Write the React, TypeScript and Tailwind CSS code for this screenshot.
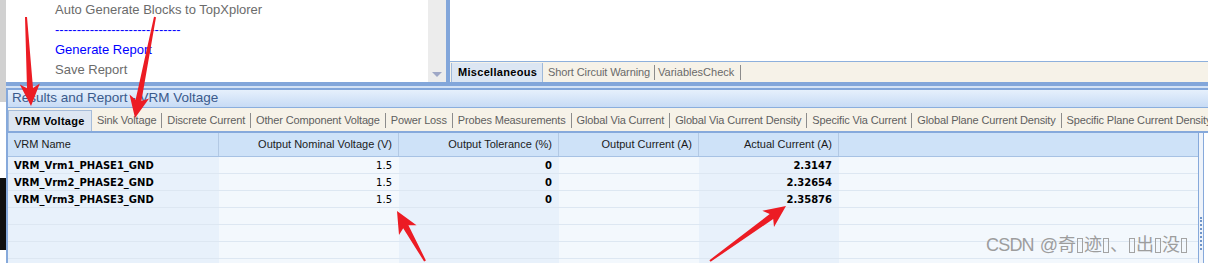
import React from "react";

type Pt = [number, number];

function arrowPoints(tail: Pt, tip: Pt, w0: number, w1: number, hw: number, hl: number): string {
  const [x1, y1] = tail;
  const [x2, y2] = tip;
  const dx = x2 - x1;
  const dy = y2 - y1;
  const L = Math.hypot(dx, dy);
  const ux = dx / L;
  const uy = dy / L;
  const px = -uy;
  const py = ux;
  const bx = x2 - ux * hl;
  const by = y2 - uy * hl;
  const nx = bx + ux * 4;
  const ny = by + uy * 4;
  const pts: Pt[] = [
    [x1 + (px * w0) / 2, y1 + (py * w0) / 2],
    [nx + (px * w1) / 2, ny + (py * w1) / 2],
    [bx + (px * hw) / 2, by + (py * hw) / 2],
    [x2, y2],
    [bx - (px * hw) / 2, by - (py * hw) / 2],
    [nx - (px * w1) / 2, ny - (py * w1) / 2],
    [x1 - (px * w0) / 2, y1 - (py * w0) / 2],
  ];
  return pts.map((p) => `${p[0].toFixed(1)},${p[1].toFixed(1)}`).join(" ");
}

const arrows: { tail: Pt; tip: Pt }[] = [
  { tail: [26, 17], tip: [31, 106] },
  { tail: [155, 17], tip: [135, 118] },
  { tail: [425, 261], tip: [397, 211] },
  { tail: [710, 261], tip: [786, 206] },
];

const bottomTabs = [
  "Sink Voltage",
  "Discrete Current",
  "Other Component Voltage",
  "Power Loss",
  "Probes Measurements",
  "Global Via Current",
  "Global Via Current Density",
  "Specific Via Current",
  "Global Plane Current Density",
  "Specific Plane Current Density",
];

const colW = ["w-[211px]", "w-[180px]", "w-[160px]", "w-[140px]", "w-[140px]", "w-[359px]"];
const colBg = ["bg-[#e8f1fb]", "bg-[#f3f8fd]", "bg-[#e8f1fb]", "bg-[#f3f8fd]", "bg-[#e8f1fb]", "bg-[#f3f8fd]"];

const headers = [
  "VRM Name",
  "Output Nominal Voltage (V)",
  "Output Tolerance (%)",
  "Output Current (A)",
  "Actual Current (A)",
  "",
];

const rows: string[][] = [
  ["VRM_Vrm1_PHASE1_GND", "1.5", "0", "", "2.3147", ""],
  ["VRM_Vrm2_PHASE2_GND", "1.5", "0", "", "2.32654", ""],
  ["VRM_Vrm3_PHASE3_GND", "1.5", "0", "", "2.35876", ""],
  ["", "", "", "", "", ""],
  ["", "", "", "", "", ""],
  ["", "", "", "", "", ""],
  ["", "", "", "", "", ""],
];

function Tofu() {
  return <span className="mx-[1px] inline-block h-[15px] w-[6px] border border-[#a3a3a3]" />;
}

export default function App() {
  return (
    <div className="relative flex h-[263px] w-[1208px] overflow-hidden bg-white font-['Liberation_Sans',Arial,sans-serif]">
      {/* left screen strip */}
      <div className="flex w-[6px] shrink-0 flex-col">
        <div className="h-[102px] shrink-0 bg-[#d1d1d1]" />
        <div className="h-[76px] shrink-0 bg-white" />
        <div className="h-[72px] shrink-0 bg-[#101010]" />
        <div className="flex-1 bg-white" />
      </div>

      <div className="flex h-[263px] w-[1202px] shrink-0 flex-col overflow-hidden">
        {/* top area */}
        <div className="flex h-[82px] shrink-0">
          <div className="flex w-[422px] shrink-0 flex-col bg-white pl-[49px] text-[13px] leading-[20px] whitespace-nowrap">
            <div className="text-[#6b6b6b]">Auto Generate Blocks to TopXplorer</div>
            <div className="text-[#0000ff]">-----------------------------</div>
            <div className="text-[#0000ff]">Generate Report</div>
            <div className="text-[#6b6b6b]">Save Report</div>
          </div>
          <div className="flex w-[18px] shrink-0 flex-col items-center justify-end bg-[#ececec] pb-[5px]">
            <svg width="10" height="5" viewBox="0 0 10 5">
              <path d="M0 0H10L5 5Z" fill="#9ea7c6" />
            </svg>
          </div>
          <div className="w-[4px] shrink-0 bg-[#82a6da]" />
          <div className="flex flex-1 flex-col">
            <div className="h-[61px] shrink-0 bg-white" />
            <div className="flex h-[21px] shrink-0 items-center border-t border-[#8eb0dc] bg-[#f6f2e8] text-[11px] whitespace-nowrap">
              <div className="ml-[1px] flex h-[19px] w-[92px] shrink-0 items-center border-r border-l border-[#9fb9da] bg-[#dce6f3] pl-[6px] font-bold tracking-[0.3px] text-black">
                Miscellaneous
              </div>
              <span className="pr-[4px] pl-[5px] tracking-[-0.1px] text-[#6a6a6a]">Short Circuit Warning</span>
              <span className="h-[15px] w-px bg-[#8c8c8c]" />
              <span className="pr-[6px] pl-[3px] text-[#6a6a6a]">VariablesCheck</span>
              <span className="h-[15px] w-px bg-[#8c8c8c]" />
            </div>
          </div>
        </div>

        {/* blue splitter band */}
        <div className="h-[4px] shrink-0 bg-[#82a6da]" />
        <div className="h-[2px] shrink-0 bg-[#d3e2f5]" />
        <div className="h-[2px] shrink-0 bg-[#82a6da]" />

        {/* bottom panel */}
        <div className="flex min-h-0 flex-1 flex-col overflow-hidden border-l-2 border-[#86a9db]">
          <div className="flex h-[18px] shrink-0 items-center border-b border-[#8aaedd] bg-gradient-to-b from-[#e6f0fc] to-[#c7dbf5] pl-[4px] text-[13.5px] whitespace-nowrap text-[#3a5a8c]">
            Results and Report - VRM Voltage
          </div>
          <div className="flex h-[23px] shrink-0 items-end overflow-hidden bg-[#f6f2e8] text-[11px] whitespace-nowrap text-[#5f5f5f]">
            <div className="flex h-[21px] w-[84px] shrink-0 items-center border-t border-r border-l border-[#a6bcd9] bg-[#dde6f2] pl-[6px] font-bold tracking-[0.3px] text-black">
              VRM Voltage
            </div>
            {bottomTabs.map((t) => (
              <div key={t} className="flex h-[21px] shrink-0 items-center">
                <span className="px-[5px] tracking-[-0.15px]">{t}</span>
                <span className="h-[15px] w-px bg-[#8c8c8c]" />
              </div>
            ))}
          </div>

          <div className="flex min-h-0 flex-1 overflow-hidden border-t-2 border-[#86a9db]">
            <div className="flex w-[1190px] shrink-0 flex-col overflow-hidden">
              <div className="flex h-[24px] shrink-0 border-b border-[#a7c2e4] bg-[#cee2f8] text-[11px] whitespace-nowrap text-[#1b1b1b]">
                {headers.map((h, i) => (
                  <div
                    key={i}
                    className={`${colW[i]} flex shrink-0 items-center ${i === 0 ? "justify-start pl-[6px]" : "justify-end pr-[6px]"} ${
                      i < 5 ? "border-r border-[#b3c9e4]" : ""
                    }`}
                  >
                    {h}
                  </div>
                ))}
              </div>
              {rows.map((r, ri) => (
                <div key={ri} className="flex h-[17px] shrink-0 font-['DejaVu_Sans',Verdana,sans-serif] text-[10px] whitespace-nowrap text-black">
                  {r.map((c, ci) => (
                    <div
                      key={ci}
                      className={`${colW[ci]} ${colBg[ci]} flex shrink-0 items-center border-b border-[#dde7f2] ${
                        ci === 0 ? "justify-start pl-[6px]" : "justify-end pr-[7px]"
                      } ${ci === 1 ? "font-normal" : "font-bold"}`}
                    >
                      {c}
                    </div>
                  ))}
                </div>
              ))}
            </div>
            <div className="w-px shrink-0 bg-[#86a9db]" />
            <div className="flex w-[4px] shrink-0 flex-col items-center bg-[#eef3fa]">
              <div className="mt-[84px] h-[33px] w-[2px] border-l-2 border-dotted border-[#6f94c8]" />
            </div>
            <div className="w-px shrink-0 bg-[#86a9db]" />
            <div className="flex-1 bg-white" />
          </div>
        </div>
      </div>

      {/* watermark */}
      <div className="pointer-events-none absolute top-[234px] left-[986px] flex items-center font-['Liberation_Sans','Noto_Sans_CJK_SC',sans-serif] text-[18px] leading-[22px] text-[#9d9d9d]">
        <span className="tracking-[-0.8px]">CSDN</span>
        <span className="ml-[6px]">@奇</span>
        <Tofu />
        <span>迹</span>
        <Tofu />
        <span>、</span>
        <Tofu />
        <span>出</span>
        <Tofu />
        <span>没</span>
        <Tofu />
      </div>

      {/* red annotation arrows */}
      <svg className="pointer-events-none absolute top-0 left-0" width="1208" height="263" viewBox="0 0 1208 263">
        {arrows.map((a, i) => (
          <polygon key={i} points={arrowPoints(a.tail, a.tip, 2, 6, 20, 22)} fill="#ec1c24" />
        ))}
      </svg>
    </div>
  );
}
